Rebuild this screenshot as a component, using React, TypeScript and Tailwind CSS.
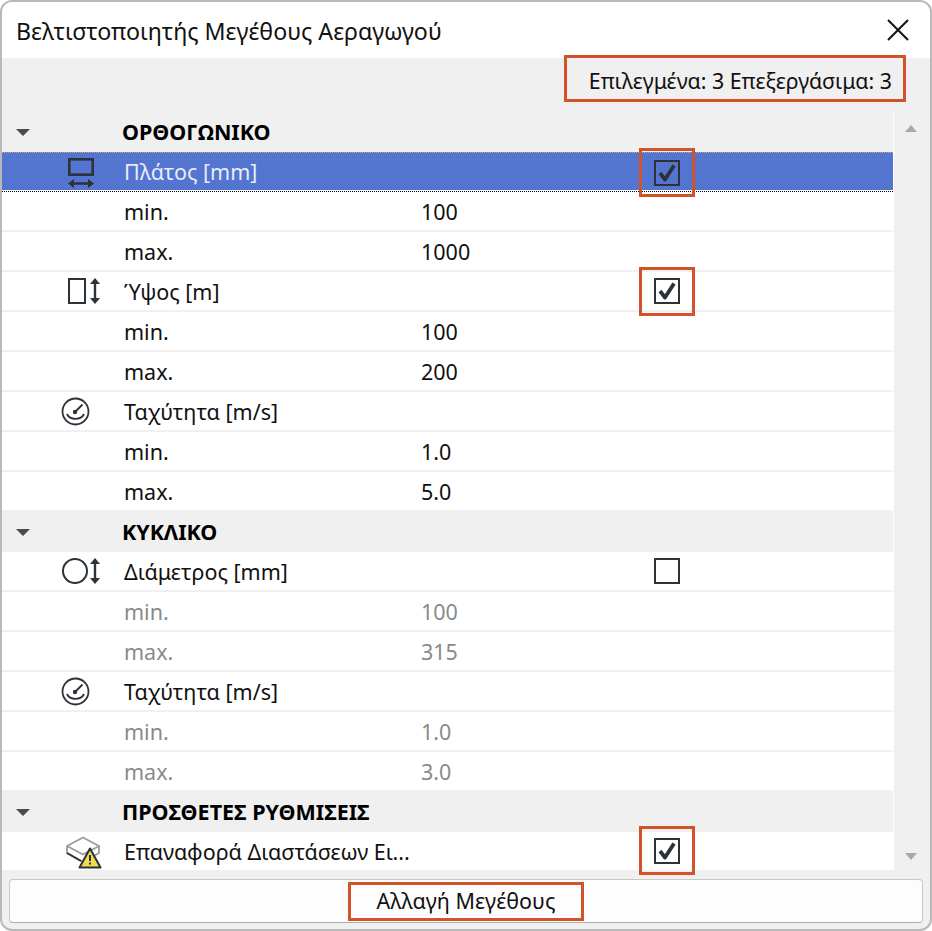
import React from 'react';

const Check = () => (
  <div className="w-[26px] h-[26px] border-[2px] border-[#2d3138] flex items-center justify-center">
    <svg width="22" height="22" viewBox="0 0 22 22" fill="none">
      <path d="M4 11 L9 17.5 L18 3.5" stroke="#2d3138" strokeWidth="3.8" strokeLinejoin="round" />
    </svg>
  </div>
);

const Empty = () => <div className="w-[26px] h-[26px] border-[2px] border-[#2d3138] bg-white" />;

const WidthIcon = () => (
  <svg className="ml-[66px]" width="26" height="30" viewBox="0 0 26 30" fill="none" stroke="#2d3138">
    <rect x="1.3" y="1.3" width="23.4" height="15.4" strokeWidth="2.6" />
    <path d="M5 25.5 H21" strokeWidth="2.4" />
    <path d="M0 25.5 L6 21 V30 Z M26 25.5 L20 21 V30 Z" fill="#2d3138" stroke="none" />
  </svg>
);

const HeightIcon = () => (
  <svg className="ml-[66px]" width="32" height="26" viewBox="0 0 32 26" fill="none" stroke="#2d3138">
    <rect x="1" y="1" width="16" height="24" strokeWidth="2" />
    <path d="M27 5 V21" strokeWidth="2.4" />
    <path d="M27 0 L32 6 H22 Z M27 26 L32 20 H22 Z" fill="#2d3138" stroke="none" />
  </svg>
);

const CircleIcon = () => (
  <svg className="ml-[60px]" width="38" height="26" viewBox="0 0 38 26" fill="none" stroke="#2d3138">
    <circle cx="13" cy="13" r="12" strokeWidth="2" />
    <path d="M33 5 V21" strokeWidth="2.4" />
    <path d="M33 0 L38 6 H28 Z M33 26 L38 20 H28 Z" fill="#2d3138" stroke="none" />
  </svg>
);

const GaugeIcon = () => (
  <svg className="ml-[59px]" width="29" height="29" viewBox="0 0 29 29" fill="none" stroke="#2d3138">
    <circle cx="14.5" cy="14.5" r="13" strokeWidth="1.8" />
    <path d="M14 15 L21.5 7.5" strokeWidth="1.8" />
    <circle cx="14" cy="15" r="2.2" fill="#2d3138" stroke="none" />
    <path d="M6 17 C9 23.5 20 23.5 23 17" strokeWidth="1.8" />
  </svg>
);

const ResetIcon = () => (
  <svg className="ml-[64px] mt-[3px]" width="36" height="34" viewBox="0 0 36 34" fill="none">
    <path d="M1 10 L17 1.5 L33 10 L17 18.5 Z" stroke="#9a9c9e" strokeWidth="1.8" strokeLinejoin="round" />
    <path d="M1 10 V17 L17 26 M33 10 V17 L26 21" stroke="#9a9c9e" strokeWidth="1.8" />
    <path d="M1 17 L15 25" stroke="#2d3138" strokeWidth="2" />
    <path d="M24 12.5 L34.5 31.5 H13.5 Z" fill="#f2dc4e" stroke="#2d3138" strokeWidth="2" strokeLinejoin="round" />
    <path d="M24 19 V25" stroke="#2d3138" strokeWidth="2" />
    <path d="M24 26.5 V28.5" stroke="#2d3138" strokeWidth="2" />
  </svg>
);

const HeaderRow = ({ title }: { title: string }) => (
  <div className="h-10 flex items-center bg-[#f0f0f0] shrink-0">
    <div className="w-[120px] pl-[14px] shrink-0">
      <div className="w-0 h-0 border-x-[7px] border-x-transparent border-t-[7px] border-t-[#4a4a4a]" />
    </div>
    <span className="font-bold text-[21.5px] text-black">{title}</span>
  </div>
);

const ParamRow = ({ icon, label, check }: { icon: React.ReactNode; label: string; check?: React.ReactNode }) => (
  <div className="h-10 flex items-center bg-white border-b-2 border-[#f0f0f0] shrink-0">
    <div className="w-[122px] flex shrink-0">{icon}</div>
    <span className="w-[530px] pt-[2px] shrink-0 text-[#111]">{label}</span>
    {check}
  </div>
);

const ValueRow = ({ name, value, off }: { name: string; value: string; off?: boolean }) => (
  <div className={`h-10 pt-[2px] flex items-center bg-white border-b-2 border-[#f0f0f0] shrink-0 ${off ? 'text-[#8a8a8a]' : 'text-[#111]'}`}>
    <span className="w-[419px] pl-[122px] shrink-0">{name}</span>
    <span>{value}</span>
  </div>
);

const App: React.FC = () => {
  return (
    <div
      className="relative w-[932px] h-[931px] flex flex-col bg-[#f0f0f0] border-2 border-[#b9b9b9] rounded-[12px] overflow-hidden text-[21.5px]"
      style={{ fontFamily: '"Noto Sans", "Open Sans", sans-serif' }}
    >
      <div className="h-[56px] shrink-0 bg-white flex items-center justify-between pl-[14px] pr-[21px]">
        <span className="text-[23.2px] text-[#111] pt-[2px]">Βελτιστοποιητής Μεγέθους Αεραγωγού</span>
        <svg width="22" height="22" viewBox="0 0 22 22" stroke="#111" strokeWidth="2">
          <path d="M1 1 L21 21 M21 1 L1 21" />
        </svg>
      </div>

      <div className="h-[54px] shrink-0 flex items-center justify-end pr-[38px] pb-[8px] text-[21.3px] text-[#111]">
        Επιλεγμένα: 3 Επεξεργάσιμα: 3
      </div>

      <div className="h-[758px] shrink-0 flex">
        <div className="w-[892px] shrink-0 flex flex-col overflow-hidden border-r border-white">
          <HeaderRow title="ΟΡΘΟΓΩΝΙΚΟ" />
          <div className="h-10 flex items-center shrink-0 bg-[#5375d0] border-t border-dotted border-t-[#c9a27e] relative">
            <div className="w-[122px] flex shrink-0"><WidthIcon /></div>
            <span className="w-[530px] shrink-0 text-[#e8ecfa]">Πλάτος [mm]</span>
            <Check />
            <div className="absolute left-0 right-0 bottom-0 h-[2px] bg-white border-b border-dotted border-black" />
          </div>
          <ValueRow name="min." value="100" />
          <ValueRow name="max." value="1000" />
          <ParamRow icon={<HeightIcon />} label="Ύψος [m]" check={<Check />} />
          <ValueRow name="min." value="100" />
          <ValueRow name="max." value="200" />
          <ParamRow icon={<GaugeIcon />} label="Ταχύτητα [m/s]" />
          <ValueRow name="min." value="1.0" />
          <ValueRow name="max." value="5.0" />
          <HeaderRow title="ΚΥΚΛΙΚΟ" />
          <ParamRow icon={<CircleIcon />} label="Διάμετρος [mm]" check={<Empty />} />
          <ValueRow name="min." value="100" off />
          <ValueRow name="max." value="315" off />
          <ParamRow icon={<GaugeIcon />} label="Ταχύτητα [m/s]" />
          <ValueRow name="min." value="1.0" off />
          <ValueRow name="max." value="3.0" off />
          <HeaderRow title="ΠΡΟΣΘΕΤΕΣ ΡΥΘΜΙΣΕΙΣ" />
          <ParamRow icon={<ResetIcon />} label="Επαναφορά Διαστάσεων Ει..." check={<Check />} />
        </div>
        <div className="flex-1 flex flex-col items-center justify-between pt-[13px] pb-[10px] pr-[2px]">
          <div className="w-0 h-0 border-x-[6px] border-x-transparent border-b-[7px] border-b-[#a8a8a8]" />
          <div className="w-0 h-0 border-x-[6px] border-x-transparent border-t-[7px] border-t-[#a8a8a8]" />
        </div>
      </div>

      <div className="flex-1 px-[7px] pt-[9px]">
        <div className="h-[44px] bg-[#fdfdfd] border border-[#c8c8c8] border-b-[#b0b0b0] rounded-[4px] flex items-center justify-center text-[#111]">
          Αλλαγή Μεγέθους
        </div>
      </div>

      <div className="absolute left-[562px] top-[53px] w-[342px] h-[47px] border-[3px] border-[#cf5427]" />
      <div className="absolute left-[637px] top-[146px] w-[56px] h-[49px] border-[3px] border-[#cf5427]" />
      <div className="absolute left-[637px] top-[265px] w-[56px] h-[49px] border-[3px] border-[#cf5427]" />
      <div className="absolute left-[637px] top-[824px] w-[56px] h-[49px] border-[3px] border-[#cf5427]" />
      <div className="absolute left-[346px] top-[880px] w-[236px] h-[39px] border-[3px] border-[#cf5427]" />
    </div>
  );
};

export default App;
